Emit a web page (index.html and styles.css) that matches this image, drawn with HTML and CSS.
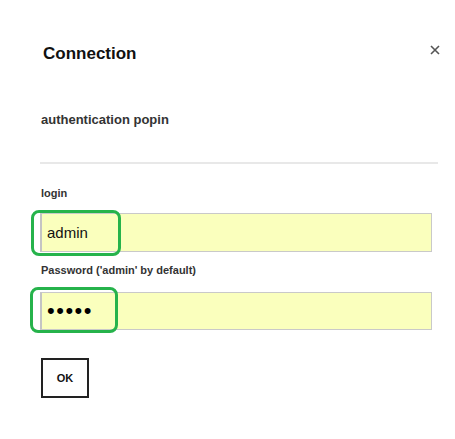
FILE: index.html
```html
<!DOCTYPE html>
<html>
<head>
<meta charset="utf-8">
<link rel="stylesheet" href="styles.css">
</head>
<body>
<div class="modal">
  <div class="header">
    <h1 class="title">Connection</h1>
    <button class="close" aria-label="close">
      <svg width="10" height="10" viewBox="0 0 10 10"><path d="M1 1 L9 9 M9 1 L1 9" stroke="#555" stroke-width="1.6" fill="none"/></svg>
    </button>
  </div>
  <p class="subtitle">authentication popin</p>
  <hr class="divider">
  <form class="form">
    <label class="label" for="login">login</label>
    <div class="field">
      <input class="input" id="login" type="text" value="admin">
      <span class="mark mark-login"></span>
    </div>
    <label class="label label-pass" for="pass">Password ('admin' by default)</label>
    <div class="field field-pass">
      <input class="input input-pass" id="pass" type="password" value="admin">
      <span class="mark mark-pass"></span>
    </div>
    <button class="ok" type="button">OK</button>
  </form>
</div>
</body>
</html>
```
FILE: styles.css
```css
html, body {
  margin: 0;
  padding: 0;
  background: #fff;
}
body {
  font-family: "Liberation Sans", Arial, sans-serif;
  color: #111;
}
.modal {
  padding: 41px 17px 0 40px;
}
.header {
  display: flex;
  justify-content: space-between;
  align-items: flex-start;
}
.title {
  margin: 3px 0 0 3px;
  font-size: 17px;
  line-height: 20px;
  font-weight: bold;
  color: #111;
}
.close {
  margin: 4px -2px 0 0;
  padding: 0;
  border: 0;
  background: none;
  width: 10px;
  height: 10px;
  display: block;
}
.close svg {
  display: block;
}
.subtitle {
  margin: 48px 0 0 1px;
  font-size: 13px;
  line-height: 15px;
  font-weight: bold;
  color: #333;
}
.divider {
  margin: 35px 0 0 0;
  border: 0;
  height: 2px;
  background: #e8e8e8;
}
.form {
  display: flex;
  flex-direction: column;
  align-items: flex-start;
}
.label {
  margin: 23px 0 0 1px;
  font-size: 11px;
  line-height: 13px;
  font-weight: bold;
  color: #333;
}
.label-pass {
  margin-top: 12px;
}
.field {
  position: relative;
  margin-top: 13px;
  width: 392px;
}
.field-pass {
  margin-top: 15px;
}
.input {
  display: block;
  box-sizing: border-box;
  width: 392px;
  height: 39px;
  margin: 0;
  padding: 0 0 0 5px;
  border: 1px solid #c9c9c9;
  border-left: 2px solid #c4c4c4;
  background: #faffbd;
  font-family: "Liberation Sans", Arial, sans-serif;
  font-size: 15px;
  color: #111;
  outline: none;
}
.input-pass {
  height: 38px;
  font-size: 22px;
  letter-spacing: 1.5px;
  color: #000;
}
.mark {
  position: absolute;
  box-sizing: border-box;
  border: 3px solid #26b34b;
  border-radius: 8px;
  pointer-events: none;
}
.mark-login {
  left: -9px;
  top: -3px;
  width: 90px;
  height: 46px;
}
.mark-pass {
  left: -10px;
  top: -5px;
  width: 88px;
  height: 46px;
}
.ok {
  margin: 28px 0 0 1px;
  box-sizing: border-box;
  width: 48px;
  height: 40px;
  padding: 0;
  border: 2px solid #222;
  background: #fff;
  font-family: "Liberation Sans", Arial, sans-serif;
  font-size: 11px;
  font-weight: bold;
  color: #111;
}
```
